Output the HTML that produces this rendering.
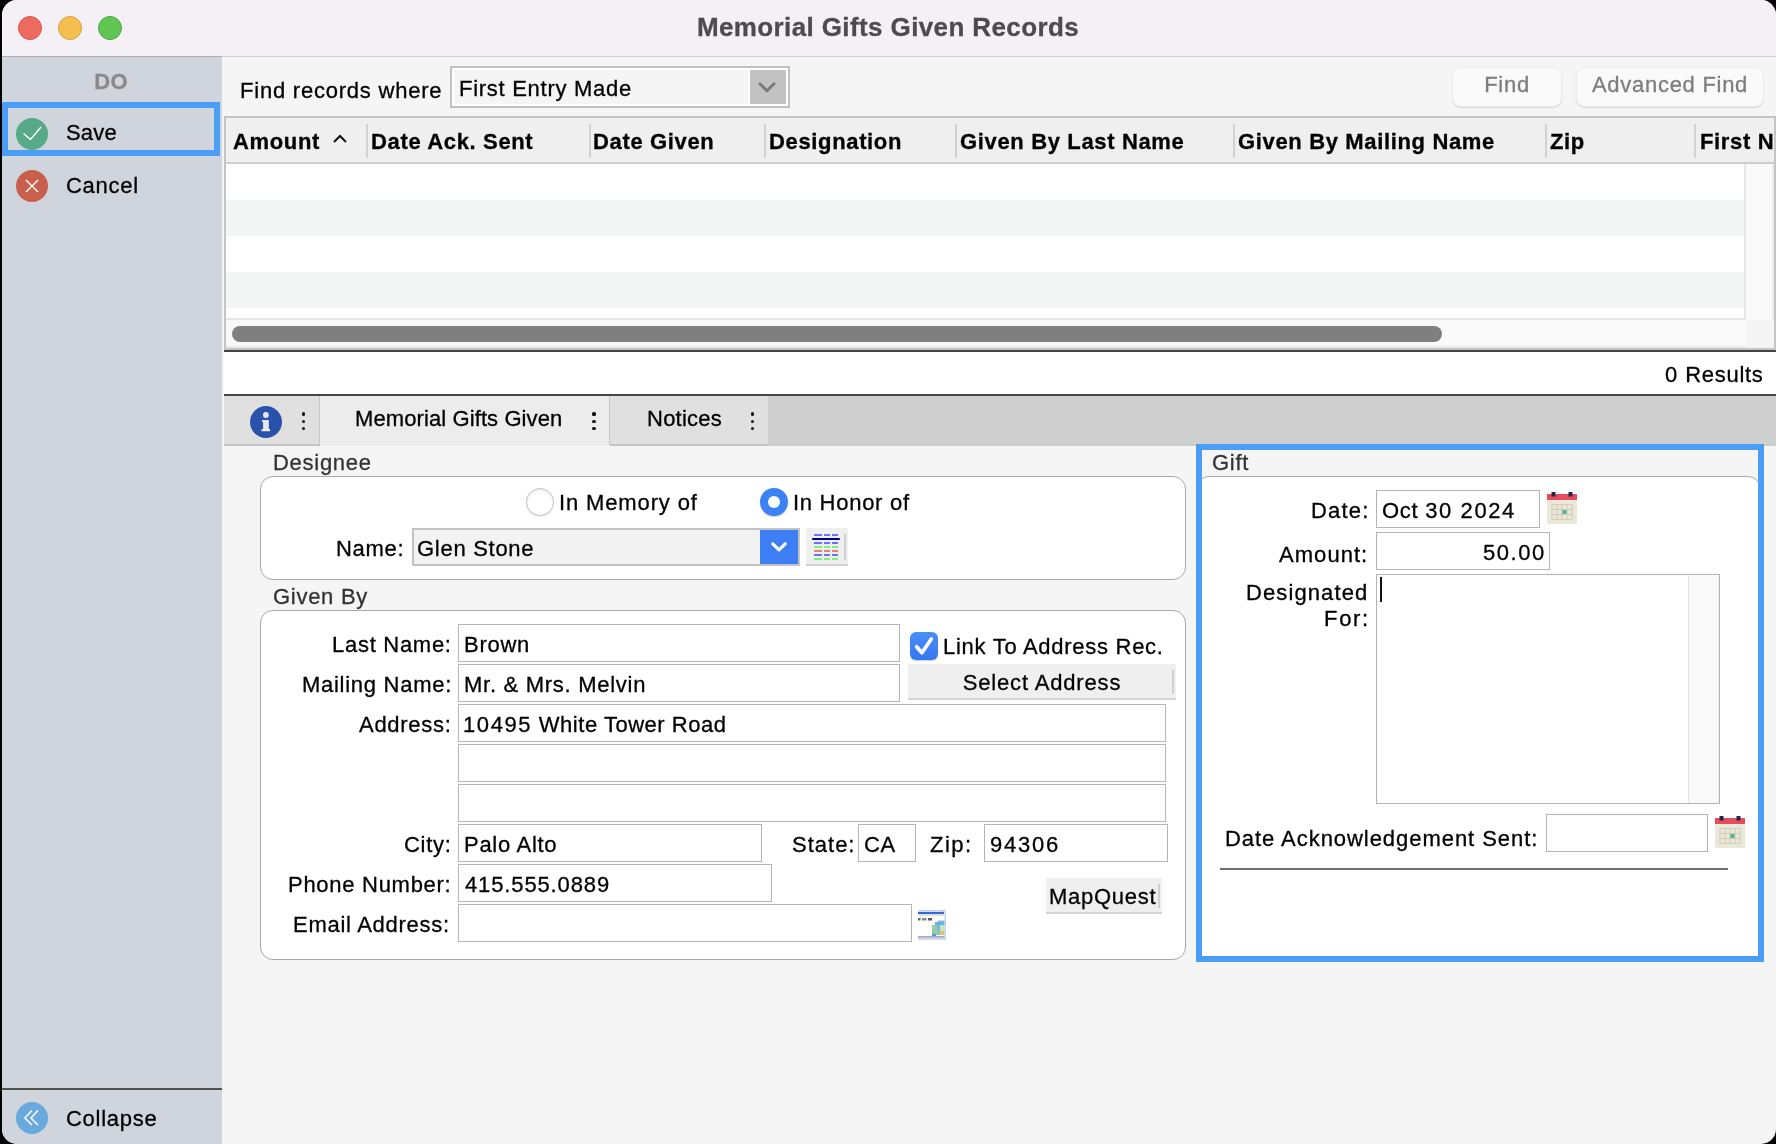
<!DOCTYPE html>
<html><head><meta charset="utf-8">
<style>
html,body{margin:0;padding:0;}
body{width:1776px;height:1144px;position:relative;overflow:hidden;background:#000;font-family:"Liberation Sans",sans-serif;color:#000;}
.a{position:absolute;box-sizing:border-box;}
.t{position:absolute;will-change:transform;-webkit-text-stroke:.3px currentColor;font-size:22px;line-height:22px;letter-spacing:.72px;white-space:nowrap;}
.b{font-weight:bold;letter-spacing:.65px;}
.win{position:absolute;left:0;top:0;width:1776px;height:1144px;clip-path:inset(0 0 0 2px round 15px);overflow:hidden;background:#f5f5f5;}
.fld{position:absolute;box-sizing:border-box;background:#fff;border:1.5px solid #b4b4b4;}
.dots{position:absolute;width:3.2px;height:18px;}
.dots i{position:absolute;left:0;width:3.2px;height:3.2px;border-radius:1.6px;background:#111;}
</style></head><body>
<div class="win">
  <!-- title bar -->
  <div class="a" style="left:0;top:0;width:1776px;height:56px;background:#f4f0f5;"></div>
  <div class="a" style="left:0;top:56px;width:222px;height:1px;background:#a9aeb8;"></div>
  <div class="a" style="left:222px;top:56px;width:1554px;height:1px;background:#d2d2d2;"></div>
  <div class="a" style="left:18px;top:16px;width:24px;height:24px;border-radius:12px;background:#ed6a5e;border:1px solid #d9524a;"></div>
  <div class="a" style="left:58px;top:16px;width:24px;height:24px;border-radius:12px;background:#f4bf4f;border:1px solid #d9a23c;"></div>
  <div class="a" style="left:98px;top:16px;width:24px;height:24px;border-radius:12px;background:#61c554;border:1px solid #4ea83f;"></div>
  <div class="t b" style="left:0;width:1776px;text-align:center;top:14px;font-size:26px;line-height:26px;letter-spacing:.39px;color:#4d4b50;">Memorial Gifts Given Records</div>

  <!-- sidebar -->
  <div class="a" style="left:0;top:57px;width:222px;height:1087px;background:#d0d4dd;"></div>
  <div class="t b" style="left:0;width:222px;text-align:center;top:71px;color:#898989;letter-spacing:.3px;">DO</div>
  <div class="a" style="left:2px;top:102px;width:218px;height:54px;border:6px solid #4a9ef5;"></div>
  <div class="a" style="left:16px;top:118px;width:32px;height:32px;border-radius:16px;background:#58a98a;"></div>
  <svg class="a" style="left:16px;top:118px;" width="32" height="32"><path d="M7.5 15.5 L14.5 21.5 L25 9" stroke="#fff" stroke-width="1.4" fill="none"/></svg>
  <div class="t" style="left:66px;top:122px;letter-spacing:.2px;">Save</div>
  <div class="a" style="left:16px;top:170px;width:32px;height:32px;border-radius:16px;background:#c9604e;"></div>
  <svg class="a" style="left:16px;top:170px;" width="32" height="32"><path d="M10 10 L22 22 M22 10 L10 22" stroke="#fff" stroke-width="1.4" fill="none"/></svg>
  <div class="t" style="left:66px;top:175px;">Cancel</div>
  <div class="a" style="left:2px;top:1088px;width:220px;height:2px;background:#505050;"></div>
  <div class="a" style="left:16px;top:1102px;width:32px;height:32px;border-radius:16px;background:#6aa9dd;"></div>
  <svg class="a" style="left:16px;top:1102px;" width="32" height="32"><path d="M15.9 8.6 L8.9 15.9 L15.9 23.1 M21.9 8.6 L15 15.9 L21.9 23.1" stroke="#fff" stroke-width="1.5" fill="none"/></svg>
  <div class="t" style="left:66px;top:1108px;">Collapse</div>

  <!-- find bar -->
  <div class="t" style="left:240px;top:80px;letter-spacing:.78px;">Find records where</div>
  <div class="a" style="left:450px;top:66px;width:340px;height:42px;border:2px solid #c1c1c1;background:#fff;"></div>
  <div class="a" style="left:454px;top:70px;width:294px;height:34px;background:#f5f5f5;"></div>
  <div class="a" style="left:750px;top:70px;width:36px;height:34px;background:#c2c2c2;"></div>
  <svg class="a" style="left:750px;top:70px;" width="36" height="34"><path d="M10 13.8 L17 20.8 L24 13.8" stroke="#7a7a7a" stroke-width="3" stroke-linecap="round" stroke-linejoin="round" fill="none"/></svg>
  <div class="t" style="left:459px;top:78px;">First Entry Made</div>
  <div class="a" style="left:1452px;top:67px;width:110px;height:40px;border-radius:9px;background:#fafafa;border:1px solid #ececec;box-shadow:0 1px 1.2px rgba(0,0,0,.13);"></div>
  <div class="t" style="left:1452px;width:110px;text-align:center;top:74px;color:#7d7d7d;">Find</div>
  <div class="a" style="left:1576px;top:67px;width:188px;height:40px;border-radius:9px;background:#fafafa;border:1px solid #ececec;box-shadow:0 1px 1.2px rgba(0,0,0,.13);"></div>
  <div class="t" style="left:1576px;width:188px;text-align:center;top:74px;color:#7d7d7d;">Advanced Find</div>

  <!-- table -->
  <div class="a" style="left:224px;top:116px;width:1552px;height:234px;border:2px solid #c4c4c4;background:#fff;overflow:hidden;">
    <div class="a" style="left:0;top:0;width:1548px;height:44px;background:#efefef;"></div>
    <div class="a" style="left:0;top:44px;width:1548px;height:2px;background:#cfcfcf;"></div>
    <div class="a" style="left:0;top:82px;width:1518px;height:36px;background:#f3f4f4;"></div>
    <div class="a" style="left:0;top:154px;width:1518px;height:36px;background:#f3f4f4;"></div>
    <div class="a" style="left:1518px;top:46px;width:2px;height:156px;background:#e6e6e6;"></div>
    <div class="a" style="left:1520px;top:46px;width:28px;height:156px;background:#f9f9f9;"></div>
    <div class="a" style="left:1546px;top:46px;width:1.5px;height:156px;background:#eeeeee;"></div>
    <div class="a" style="left:0;top:200px;width:1520px;height:2px;background:#e6e6e6;"></div>
    <div class="a" style="left:0;top:202px;width:1520px;height:26px;background:#f9f9f9;"></div>
    <div class="a" style="left:0;top:228px;width:1520px;height:2px;background:#ebebeb;"></div>
    <div class="a" style="left:1520px;top:202px;width:28px;height:28px;background:#f4f4f4;"></div>
    <div class="a" style="left:6px;top:208px;width:1210px;height:16px;border-radius:8px;background:#7f7f7f;"></div>
    <div class="a" style="left:140px;top:6px;width:2px;height:34px;background:#d2d2d2;"></div>
    <div class="a" style="left:363px;top:6px;width:2px;height:34px;background:#d2d2d2;"></div>
    <div class="a" style="left:538px;top:6px;width:2px;height:34px;background:#d2d2d2;"></div>
    <div class="a" style="left:729px;top:6px;width:2px;height:34px;background:#d2d2d2;"></div>
    <div class="a" style="left:1007px;top:6px;width:2px;height:34px;background:#d2d2d2;"></div>
    <div class="a" style="left:1319px;top:6px;width:2px;height:34px;background:#d2d2d2;"></div>
    <div class="a" style="left:1468px;top:6px;width:2px;height:34px;background:#d2d2d2;"></div>
    <div class="t b" style="left:7px;top:13px;">Amount</div>
    <svg class="a" style="left:105px;top:14px;" width="18" height="12"><path d="M3 10 L9 4 L15 10" stroke="#111" stroke-width="2" fill="none"/></svg>
    <div class="t b" style="left:145px;top:13px;">Date Ack. Sent</div>
    <div class="t b" style="left:367px;top:13px;">Date Given</div>
    <div class="t b" style="left:543px;top:13px;">Designation</div>
    <div class="t b" style="left:734px;top:13px;">Given By Last Name</div>
    <div class="t b" style="left:1012px;top:13px;">Given By Mailing Name</div>
    <div class="t b" style="left:1324px;top:13px;">Zip</div>
    <div class="t b" style="left:1474px;top:13px;">First Name</div>
  </div>
  <div class="a" style="left:224px;top:350px;width:1552px;height:2px;background:#444;"></div>

  <!-- results -->
  <div class="a" style="left:224px;top:352px;width:1552px;height:42px;background:#fff;"></div>
  <div class="t" style="right:12px;top:364px;"><span style="letter-spacing:1.1px">0</span> Results</div>
  <div class="a" style="left:224px;top:394px;width:1552px;height:2px;background:#454545;"></div>

  <!-- tab bar -->
  <div class="a" style="left:224px;top:396px;width:1552px;height:50px;background:#cfcfcf;"></div>
  <div class="a" style="left:224px;top:396px;width:96px;height:50px;background:#e0e0e0;border-bottom:2px solid #c6c6c6;border-right:1.5px solid #c6c6c6;"></div>
  <div class="a" style="left:250px;top:406px;width:32px;height:32px;border-radius:16px;background:#2a52ad;"></div>
  <svg class="a" style="left:250px;top:406px;" width="32" height="32"><circle cx="15.9" cy="9" r="2.9" fill="#e8e8e8"/><path d="M12 13.9 H18.8 V23 H20 V25.2 H11.5 V23 H13.1 V16 H12 Z" fill="#e8e8e8"/></svg>
  <div class="dots" style="left:302.3px;top:412.4px;"><i style="top:0"></i><i style="top:7.3px"></i><i style="top:14.6px"></i></div>
  <div class="a" style="left:320px;top:396px;width:290px;height:50px;background:#ececec;"></div>
  <div class="t" style="left:355px;top:408px;letter-spacing:.1px;">Memorial Gifts Given</div>
  <div class="dots" style="left:592.4px;top:412.4px;"><i style="top:0"></i><i style="top:7.3px"></i><i style="top:14.6px"></i></div>
  <div class="a" style="left:609px;top:396px;width:159px;height:50px;background:#e0e0e0;border-left:1.5px solid #c6c6c6;border-bottom:2px solid #c6c6c6;border-bottom-left-radius:3px;"></div>
  <div class="t" style="left:646.5px;top:408px;letter-spacing:.25px;">Notices</div>
  <div class="dots" style="left:751px;top:412.4px;"><i style="top:0"></i><i style="top:7.3px"></i><i style="top:14.6px"></i></div>

  <!-- CONTENT -->
  <!-- Designee -->
  <div class="t" style="left:273px;top:452px;color:#333;">Designee</div>
  <div class="a" style="left:260px;top:476px;width:926px;height:104px;border:1px solid #a9a9a9;border-radius:13px;background:#fff;"></div>
  <div class="a" style="left:526px;top:488px;width:28px;height:28px;border-radius:14px;background:#fff;border:1px solid #c4c4c4;box-shadow:inset 0 2px 3px rgba(0,0,0,.07),0 .5px 1px rgba(0,0,0,.12);"></div>
  <div class="t" style="left:559px;top:492px;letter-spacing:.87px;">In Memory of</div>
  <div class="a" style="left:760px;top:488px;width:28px;height:28px;border-radius:14px;background:#3b82f6;box-shadow:0 1px 1.5px rgba(0,0,0,.2);"></div>
  <div class="a" style="left:768px;top:496px;width:12px;height:12px;border-radius:6px;background:#fff;"></div>
  <div class="t" style="left:793px;top:492px;">In Honor of</div>
  <div class="t" style="right:1372px;top:538px;">Name:</div>
  <div class="a" style="left:412px;top:528px;width:388px;height:38px;border:2px solid #c2c2c2;background:#f3f3f3;"></div>
  <div class="a" style="left:760px;top:530px;width:38px;height:34px;background:#3d7ef5;"></div>
  <svg class="a" style="left:760px;top:530px;" width="38" height="34"><path d="M12.8 13.8 L19 19.8 L25.2 13.8" stroke="#fff" stroke-width="3.2" stroke-linecap="round" stroke-linejoin="round" fill="none"/></svg>
  <div class="t" style="left:417px;top:538px;">Glen Stone</div>
  <div class="a" style="left:806px;top:528px;width:42px;height:38px;background:#efefef;border-bottom:2px solid #d0d0d0;"></div>
  <svg class="a" style="left:806px;top:528px;" width="42" height="38">
    <g stroke-width="2">
    <path d="M8 7h8M18 7h6M26 7h6M8 15h8M18 15h6M26 15h6M8 27h8M18 27h6M26 27h6" stroke="#6e6ef6"/>
    <path d="M8 19h8M18 19h6M26 19h6M8 31h8M18 31h6M26 31h6" stroke="#80f07e"/>
    <path d="M8 23h8M18 23h6M26 23h6" stroke="#e8807a"/>
    </g>
    <path d="M7 11h26" stroke="#000080" stroke-width="2.2" stroke-linecap="round"/>
    <path d="M39 6v26" stroke="#d0d0d0" stroke-width="2"/>
  </svg>

  <!-- Given By -->
  <div class="t" style="left:273px;top:586px;color:#333;">Given By</div>
  <div class="a" style="left:260px;top:610px;width:926px;height:350px;border:1px solid #a9a9a9;border-radius:13px;background:#fff;"></div>
  <div class="t" style="right:1324.5px;top:634px;">Last Name:</div>
  <div class="t" style="right:1324.5px;top:674px;">Mailing Name:</div>
  <div class="t" style="right:1324.5px;top:714px;">Address:</div>
  <div class="t" style="right:1324.5px;top:834px;">City:</div>
  <div class="t" style="right:1325px;top:874px;">Phone Number:</div>
  <div class="t" style="right:1326.5px;top:914px;">Email Address:</div>
  <div class="fld" style="left:458px;top:624px;width:442px;height:38px;"></div>
  <div class="t" style="left:464px;top:634px;">Brown</div>
  <div class="fld" style="left:458px;top:664px;width:442px;height:38px;"></div>
  <div class="t" style="left:464px;top:674px;">Mr. &amp; Mrs. Melvin</div>
  <div class="fld" style="left:458px;top:704px;width:708px;height:38px;"></div>
  <div class="t" style="left:462.5px;top:714px;letter-spacing:.52px;"><span style="letter-spacing:1.6px">10495</span> White Tower Road</div>
  <div class="fld" style="left:458px;top:744px;width:708px;height:38px;"></div>
  <div class="fld" style="left:458px;top:784px;width:708px;height:38px;"></div>
  <div class="fld" style="left:458px;top:824px;width:304px;height:38px;"></div>
  <div class="t" style="left:464px;top:834px;">Palo Alto</div>
  <div class="t" style="left:791.5px;top:834px;letter-spacing:1px;">State:</div>
  <div class="fld" style="left:858px;top:824px;width:58px;height:38px;"></div>
  <div class="t" style="left:864px;top:834px;">CA</div>
  <div class="t" style="left:930px;top:834px;letter-spacing:1.5px;">Zip:</div>
  <div class="fld" style="left:984px;top:824px;width:184px;height:38px;"></div>
  <div class="t" style="left:990px;top:834px;letter-spacing:1.75px;">94306</div>
  <div class="fld" style="left:458px;top:864px;width:314px;height:38px;"></div>
  <div class="t" style="left:464.5px;top:874px;letter-spacing:.87px;">415.555.0889</div>
  <div class="fld" style="left:458px;top:904px;width:454px;height:38px;"></div>
  <div class="a" style="left:910px;top:632px;width:28px;height:28px;border-radius:6px;background:linear-gradient(#4a8ff7,#3577f0);box-shadow:0 1px 1.5px rgba(0,0,0,.2);"></div>
  <svg class="a" style="left:910px;top:632px;" width="28" height="28"><path d="M6.6 14.8 L11.9 20.7 L21.3 7" stroke="#fff" stroke-width="3.7" stroke-linecap="round" stroke-linejoin="round" fill="none"/></svg>
  <div class="t" style="left:943px;top:636px;">Link To Address Rec.</div>
  <div class="a" style="left:908px;top:664px;width:268px;height:36px;background:#efefef;border-bottom:2px solid #d4d4d4;"></div>
  <div class="a" style="left:1172px;top:670px;width:1.5px;height:24px;background:#cfcfcf;"></div>
  <div class="t" style="left:908px;width:268px;text-align:center;top:672px;letter-spacing:.85px;">Select Address</div>
  <div class="a" style="left:1046px;top:878px;width:116px;height:36px;background:#efefef;border-bottom:2px solid #d4d4d4;"></div>
  <div class="a" style="left:1158px;top:884px;width:1.5px;height:24px;background:#cfcfcf;"></div>
  <div class="t" style="left:1049px;top:886px;">MapQuest</div>
  <svg class="a" style="left:918px;top:910px;" width="28" height="30">
    <rect x="0" y="0" width="28" height="30" fill="#c6d2f4"/>
    <rect x="0" y="1" width="26.5" height="27.5" fill="#fdfdfb"/>
    <rect x="0" y="1.8" width="26" height="2.4" fill="#2f6bd0"/>
    <rect x="24" y="1.8" width="2" height="2.4" fill="#6a5aa8"/>
    <rect x="0" y="4.5" width="26.5" height="1.5" fill="#dfe3e8"/>
    <rect x="0" y="8" width="2.5" height="2.5" fill="#6a6a6a"/>
    <rect x="4" y="8" width="4.5" height="2.5" fill="#8a8a8a"/>
    <rect x="10" y="8" width="4" height="2.5" fill="#5a5a5a"/>
    <rect x="20" y="10.5" width="6.5" height="1.5" fill="#8fb8e0"/>
    <rect x="17" y="12" width="9.5" height="3" fill="#5eb2ea"/>
    <rect x="14" y="15" width="5" height="10" fill="#98cca0"/>
    <rect x="19" y="15" width="3" height="6" fill="#78b8dc"/>
    <rect x="22" y="15" width="4.5" height="6" fill="#c8e4b8"/>
    <rect x="19" y="21" width="3" height="4" fill="#90c8a0"/>
    <rect x="22" y="21" width="4.5" height="4" fill="#d6c480"/>
    <rect x="14" y="24" width="4" height="2" fill="#4a9ae0"/>
    <rect x="0" y="26" width="26.5" height="1.8" fill="#a8a8d2"/>
    <rect x="0" y="28" width="26.5" height="2" fill="#d6d8e0"/>
  </svg>

  <!-- Gift -->
  <div class="t" style="left:1212px;top:452px;color:#333;">Gift</div>
  <div class="a" style="left:1196px;top:476px;width:565px;height:486px;border:1px solid #a9a9a9;border-radius:13px;background:#fff;"></div>
  <div class="a" style="left:1196px;top:444px;width:568px;height:518px;border:6px solid #4a9ef5;"></div>
  <div class="t" style="right:406px;top:500px;letter-spacing:1.2px;">Date:</div>
  <div class="fld" style="left:1376px;top:490px;width:164px;height:38px;"></div>
  <div class="t" style="left:1382px;top:500px;">Oct <span style="letter-spacing:1.6px">30 2024</span></div>
  <div class="t" style="right:408px;top:544px;letter-spacing:1.05px;">Amount:</div>
  <div class="fld" style="left:1376px;top:532px;width:174px;height:38px;"></div>
  <div class="t" style="right:230px;top:542px;letter-spacing:1.55px;">50.00</div>
  <div class="t" style="right:407.5px;top:582px;letter-spacing:1.1px;">Designated</div>
  <div class="t" style="right:406px;top:608px;letter-spacing:1.7px;">For:</div>
  <div class="fld" style="left:1376px;top:574px;width:344px;height:230px;"></div>
  <div class="a" style="left:1688px;top:575.5px;width:31px;height:227px;background:#f9f9f9;border-left:1.5px solid #e2e2e2;border-right:1.5px solid #ececec;"></div>
  <div class="a" style="left:1380px;top:577px;width:2px;height:25px;background:#111;"></div>
  <div class="t" style="left:1225px;top:828px;letter-spacing:.95px;">Date Acknowledgement Sent:</div>
  <div class="fld" style="left:1546px;top:814px;width:162px;height:38px;"></div>
  <div class="a" style="left:1220px;top:868px;width:508px;height:2px;background:#6f6f6f;"></div>
  <svg class="a" style="left:1547px;top:492px;" width="30" height="32">
    <rect x="0" y="2" width="30" height="30" fill="#eae8da"/>
    <rect x="0" y="2" width="30" height="6" fill="#e84b5b"/>
    <rect x="4.5" y="0" width="4" height="4.5" fill="#1c2a44"/>
    <rect x="21.5" y="0" width="4" height="4.5" fill="#1c2a44"/>
    <rect x="15" y="17.5" width="5" height="5" fill="#4bb898"/>
    <g stroke="#d3cdb5" stroke-width="1.1" fill="none"><path d="M5 12v15.5M10 12v15.5M15 12v15.5M20 12v15.5M25 12v15.5M5 12.5h20M5 17.5h20M5 22.5h20M5 27.5h20"/></g>
  </svg>
  <svg class="a" style="left:1715px;top:816px;" width="30" height="32">
    <rect x="0" y="2" width="30" height="30" fill="#eae8da"/>
    <rect x="0" y="2" width="30" height="6" fill="#e84b5b"/>
    <rect x="4.5" y="0" width="4" height="4.5" fill="#1c2a44"/>
    <rect x="21.5" y="0" width="4" height="4.5" fill="#1c2a44"/>
    <rect x="15" y="17.5" width="5" height="5" fill="#4bb898"/>
    <g stroke="#d3cdb5" stroke-width="1.1" fill="none"><path d="M5 12v15.5M10 12v15.5M15 12v15.5M20 12v15.5M25 12v15.5M5 12.5h20M5 17.5h20M5 22.5h20M5 27.5h20"/></g>
  </svg>

  </div>
</body></html>
